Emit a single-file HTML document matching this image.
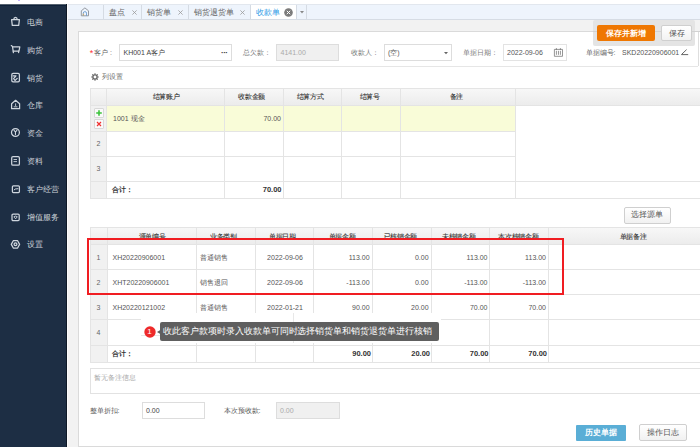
<!DOCTYPE html>
<html><head><meta charset="utf-8">
<style>
*{box-sizing:border-box;margin:0;padding:0}
html,body{width:700px;height:447px;overflow:hidden;background:#fff;font-family:"Liberation Sans",sans-serif;color:#555;position:relative}
.a{position:absolute}
.t{white-space:nowrap}
svg{position:absolute;overflow:visible}
</style></head><body>
<div class="a" style="left:18px;top:0px;width:2px;height:1px;background:#c6b3ff;"></div>
<div class="a" style="left:0px;top:4px;width:67px;height:443px;background:#1d2e44;"></div>
<div class="a" style="left:0px;top:4px;width:67px;height:1px;background:#56626f;"></div>
<div class="a" style="left:0px;top:5px;width:67px;height:1px;background:#0f2139;"></div>
<svg style="left:11px;top:17.0px" width="10" height="10" viewBox="0 0 10 10" fill="none" stroke="#cfd6de" stroke-width="1.25" stroke-linejoin="round" stroke-linecap="round"><path d="M0.6 2.6H8.4L7.7 8.4H1.3Z"/><path d="M2.7 2.5Q2.9 0.3 4.5 0.3Q6.1 0.3 6.3 2.5"/></svg>
<div class="a t" style="left:26.5px;top:13.0px;height:20px;line-height:20px;font-size:8px;color:#cdd3da;white-space:nowrap;">电商</div>
<svg style="left:11px;top:44.800000000000004px" width="10" height="10" viewBox="0 0 10 10" fill="none" stroke="#cfd6de" stroke-width="1.25" stroke-linejoin="round" stroke-linecap="round"><path d="M0.3 0.6L1.5 1.5L2.4 7.6"/><path d="M1.7 1.8H8.8L8 6H2.2"/><path d="M7.6 6V7.6"/></svg>
<div class="a t" style="left:26.5px;top:40.800000000000004px;height:20px;line-height:20px;font-size:8px;color:#cdd3da;white-space:nowrap;">购货</div>
<svg style="left:11px;top:72.60000000000001px" width="10" height="10" viewBox="0 0 10 10" fill="none" stroke="#cfd6de" stroke-width="1.25" stroke-linejoin="round" stroke-linecap="round"><rect x="0.8" y="0.4" width="7.6" height="8.4" rx="1.3"/><path d="M2.1 2.8H5L2.6 5.6M3.2 6.6L4.2 7.4L6.2 5.4"/></svg>
<div class="a t" style="left:26.5px;top:68.60000000000001px;height:20px;line-height:20px;font-size:8px;color:#cdd3da;white-space:nowrap;">销货</div>
<svg style="left:11px;top:100.4px" width="10" height="10" viewBox="0 0 10 10" fill="none" stroke="#cfd6de" stroke-width="1.25" stroke-linejoin="round" stroke-linecap="round"><path d="M0.6 3.8L4.6 0.3L8.6 3.8V8.7H0.6Z"/><path d="M3.1 6.8H6.1M4.6 3.8V5.6" stroke-width="0.9"/></svg>
<div class="a t" style="left:26.5px;top:96.4px;height:20px;line-height:20px;font-size:8px;color:#cdd3da;white-space:nowrap;">仓库</div>
<svg style="left:11px;top:128.2px" width="10" height="10" viewBox="0 0 10 10" fill="none" stroke="#cfd6de" stroke-width="1.25" stroke-linejoin="round" stroke-linecap="round"><circle cx="4.45" cy="4.45" r="3.95"/><path d="M3 2.3L4.45 4L5.9 2.3M4.45 4V6.6" stroke-width="1.1"/></svg>
<div class="a t" style="left:26.5px;top:124.19999999999999px;height:20px;line-height:20px;font-size:8px;color:#cdd3da;white-space:nowrap;">资金</div>
<svg style="left:11px;top:156.0px" width="10" height="10" viewBox="0 0 10 10" fill="none" stroke="#cfd6de" stroke-width="1.25" stroke-linejoin="round" stroke-linecap="round"><rect x="0.7" y="0.6" width="7.7" height="8.6" rx="1.3"/><path d="M2.9 3.5H5.6M2.9 5.6H5.6" stroke-width="0.9"/></svg>
<div class="a t" style="left:26.5px;top:152.0px;height:20px;line-height:20px;font-size:8px;color:#cdd3da;white-space:nowrap;">资料</div>
<svg style="left:11px;top:183.8px" width="10" height="10" viewBox="0 0 10 10" fill="none" stroke="#cfd6de" stroke-width="1.25" stroke-linejoin="round" stroke-linecap="round"><rect x="1.4" y="1.8" width="7" height="6.8" rx="1"/><path d="M3.2 5.9L4.2 5L6.9 4.7" stroke-width="1"/></svg>
<div class="a t" style="left:26.5px;top:179.8px;height:20px;line-height:20px;font-size:8px;color:#cdd3da;white-space:nowrap;">客户经营</div>
<svg style="left:11px;top:211.6px" width="10" height="10" viewBox="0 0 10 10" fill="none" stroke="#cfd6de" stroke-width="1.25" stroke-linejoin="round" stroke-linecap="round"><rect x="1" y="2" width="7.2" height="6.7" rx="1.1"/><path d="M2.9 4.6Q4.6 3.3 6.3 4.6M3.5 5.4L4.6 6.9L5.7 5.4" stroke-width="0.9"/></svg>
<div class="a t" style="left:26.5px;top:207.6px;height:20px;line-height:20px;font-size:8px;color:#cdd3da;white-space:nowrap;">增值服务</div>
<svg style="left:11px;top:239.4px" width="10" height="10" viewBox="0 0 10 10" fill="none" stroke="#cfd6de" stroke-width="1.25" stroke-linejoin="round" stroke-linecap="round"><path d="M2.3 1.7H6.6L8.6 5.4L6.6 9H2.3L0.3 5.4Z"/><circle cx="4.5" cy="5.2" r="1.45"/></svg>
<div class="a t" style="left:26.5px;top:235.4px;height:20px;line-height:20px;font-size:8px;color:#cdd3da;white-space:nowrap;">设置</div>
<div class="a" style="left:67px;top:20px;width:633px;height:427px;background:#f2f2f2;"></div>
<div class="a" style="left:66px;top:4px;width:1px;height:443px;background:#0e1826;"></div>
<div class="a" style="left:67px;top:4px;width:1px;height:443px;background:#fbfbfb;"></div>
<div class="a" style="left:68px;top:4px;width:632px;height:16px;background:#eef4fc;"></div>
<div class="a" style="left:68px;top:4px;width:632px;height:1px;background:#e2e7ee;"></div>
<div class="a" style="left:68px;top:19px;width:632px;height:1px;background:#d6dce4;"></div>
<div class="a" style="left:103px;top:5px;width:1px;height:14px;background:#d5dbe3;"></div>
<div class="a" style="left:141px;top:5px;width:1px;height:14px;background:#d5dbe3;"></div>
<div class="a" style="left:188px;top:5px;width:1px;height:14px;background:#d5dbe3;"></div>
<div class="a" style="left:250px;top:5px;width:1px;height:14px;background:#d5dbe3;"></div>
<div class="a" style="left:296px;top:5px;width:1px;height:14px;background:#d5dbe3;"></div>
<div class="a" style="left:306px;top:5px;width:1px;height:14px;background:#d5dbe3;"></div>
<div class="a" style="left:251px;top:5px;width:45px;height:14px;background:#ffffff;"></div>
<svg style="left:80px;top:6.8px" width="10" height="10" viewBox="0 0 10 10" fill="none" stroke="#8a8f96" stroke-width=".9" stroke-linejoin="round"><path d="M1.3 3.8L4.9 0.9L8.5 3.8V8.8H1.3z"/><path d="M3.3 8.8V6.2a1.6 1.6 0 0 1 3.2 0v2.6" stroke="#6a9bd0" stroke-width=".9"/><path d="M3.3 8.6V6.6" stroke="#e0a850"/></svg>
<div class="a t" style="left:108.5px;top:2.6999999999999993px;height:20px;line-height:20px;font-size:8px;color:#666;white-space:nowrap;">盘点</div>
<div class="a t" style="left:147px;top:2.6999999999999993px;height:20px;line-height:20px;font-size:8px;color:#666;white-space:nowrap;">销货单</div>
<div class="a t" style="left:193.5px;top:2.6999999999999993px;height:20px;line-height:20px;font-size:8px;color:#666;white-space:nowrap;">销货退货单</div>
<div class="a t" style="left:256px;top:2.6999999999999993px;height:20px;line-height:20px;font-size:8px;color:#2f9be6;white-space:nowrap;">收款单</div>
<svg style="left:131.5px;top:9.5px" width="5" height="5" viewBox="0 0 5 5"><path d="M.4 .4l4.2 4.2M4.6 .4L.4 4.6" stroke="#9a9a9a" stroke-width=".8"/></svg>
<svg style="left:177.9px;top:9.5px" width="5" height="5" viewBox="0 0 5 5"><path d="M.4 .4l4.2 4.2M4.6 .4L.4 4.6" stroke="#9a9a9a" stroke-width=".8"/></svg>
<svg style="left:240.0px;top:9.5px" width="5" height="5" viewBox="0 0 5 5"><path d="M.4 .4l4.2 4.2M4.6 .4L.4 4.6" stroke="#9a9a9a" stroke-width=".8"/></svg>
<svg style="left:284.4px;top:8px" width="9" height="9" viewBox="0 0 9 9"><circle cx="4.5" cy="4.5" r="4.3" fill="#7b7b7b"/><path d="M2.8 2.8l3.4 3.4M6.2 2.8L2.8 6.2" stroke="#fff" stroke-width="1"/></svg>
<svg style="left:299.5px;top:11px" width="4" height="3" viewBox="0 0 4 3"><path d="M0 0h4L2 2.4z" fill="#888"/></svg>
<div class="a" style="left:78px;top:31px;width:640px;height:416px;background:#ffffff;border:1px solid #dadada;"></div>
<div class="a t" style="left:89.8px;top:42.5px;height:20px;line-height:20px;font-size:9px;color:#f33;white-space:nowrap;">*</div>
<div class="a t" style="left:93.5px;top:42.5px;height:20px;line-height:20px;font-size:7px;color:#666;white-space:nowrap;">客户</div>
<div class="a t" style="left:110px;top:42.5px;height:20px;line-height:20px;font-size:7px;color:#777;white-space:nowrap;">:</div>
<div class="a" style="left:119px;top:44px;width:113px;height:17px;background:#fff;border:1px solid #dddddd;"></div>
<div class="a t" style="left:123.5px;top:42.5px;height:20px;line-height:20px;font-size:7px;color:#444;white-space:nowrap;">KH001 A客户</div>
<div class="a t" style="left:221px;top:42.5px;height:20px;line-height:20px;font-size:8px;color:#333;white-space:nowrap;font-weight:bold;letter-spacing:-0.5px">···</div>
<div class="a t" style="left:242.5px;top:42.5px;height:20px;line-height:20px;font-size:7px;color:#777;white-space:nowrap;">总欠款：</div>
<div class="a" style="left:276px;top:44px;width:63px;height:17px;background:#f0f0f0;border:1px solid #dddddd;"></div>
<div class="a t" style="left:280.5px;top:42.5px;height:20px;line-height:20px;font-size:7px;color:#aaa;white-space:nowrap;">4141.00</div>
<div class="a t" style="left:351px;top:42.5px;height:20px;line-height:20px;font-size:7px;color:#777;white-space:nowrap;">收款人：</div>
<div class="a" style="left:384px;top:44px;width:68px;height:17px;background:#fff;border:1px solid #dddddd;"></div>
<div class="a t" style="left:388px;top:42.5px;height:20px;line-height:20px;font-size:7px;color:#555;white-space:nowrap;">(空)</div>
<svg style="left:444px;top:51.5px" width="4" height="3" viewBox="0 0 4 3"><path d="M0 0h4L2 2.2z" fill="#666"/></svg>
<div class="a t" style="left:462.5px;top:42.5px;height:20px;line-height:20px;font-size:7px;color:#777;white-space:nowrap;">单据日期：</div>
<div class="a" style="left:503px;top:44px;width:64px;height:17px;background:#fff;border:1px solid #e3e3e3;"></div>
<div class="a t" style="left:507px;top:42.5px;height:20px;line-height:20px;font-size:7px;color:#555;white-space:nowrap;">2022-09-06</div>
<svg style="left:553px;top:47px" width="10" height="10" viewBox="0 0 10 10" fill="none" stroke="#7a7a7a" stroke-width=".8"><path d="M1.4 2.4V9.3H9.5V2.4H1.4"/><path d="M3.4 1.1V3M7.4 1.1V3M3.4 3.8V7.8M5.45 3.8V7.8M7.4 3.8V7.8"/></svg>
<div class="a t" style="left:585.5px;top:42.5px;height:20px;line-height:20px;font-size:7px;color:#666;white-space:nowrap;">单据编号:</div>
<div class="a t" style="left:622px;top:42.5px;height:20px;line-height:20px;font-size:7px;color:#555;white-space:nowrap;">SKD20220906001</div>
<svg style="left:680px;top:47.5px" width="10" height="10" viewBox="0 0 10 10" fill="none" stroke="#555" stroke-width=".9"><path d="M1.8 6.2L6.6 1.6M1.2 6.6H8.2"/></svg>
<div class="a" style="left:90px;top:66px;width:608px;height:1px;background:#e6e6e6;"></div>
<div class="a" style="left:698px;top:31px;width:1px;height:35px;background:#dedede;"></div>
<div class="a" style="left:593px;top:20px;width:102px;height:26px;background:#e4e4e4;border-radius:2px;"></div>
<div class="a" style="left:593px;top:31px;width:107px;height:1px;background:#d2d2d2;"></div>
<div class="a" style="left:597px;top:25px;width:58px;height:16px;background:#ef7701;border-radius:2px;"></div>
<div class="a t" style="left:526.2px;top:23.6px;width:200px;height:20px;line-height:20px;text-align:center;font-size:8px;color:#fff;font-weight:bold">保存并新增</div>
<div class="a" style="left:661px;top:25px;width:31px;height:16px;background:linear-gradient(#ffffff,#f2f2f2);border:1px solid #cfcfcf;border-radius:2px;"></div>
<div class="a t" style="left:576.6px;top:23.6px;width:200px;height:20px;line-height:20px;text-align:center;font-size:8px;color:#555;">保存</div>
<svg style="left:90.5px;top:73.3px" width="8" height="8" viewBox="0 0 8 8"><g fill="none" stroke="#666" stroke-width="1.3"><circle cx="4" cy="4" r="2.1"/><path d="M4 .2v1.5M4 6.3v1.5M.2 4h1.5M6.3 4h1.5M1.3 1.3l1 1M5.7 5.7l1 1M1.3 6.7l1-1M5.7 2.3l1-1" stroke-width="1.1"/></g></svg>
<div class="a t" style="left:102px;top:67.0px;height:20px;line-height:20px;font-size:7px;color:#666;white-space:nowrap;">列设置</div>
<div class="a" style="left:90px;top:88px;width:610px;height:17px;background:linear-gradient(#f8f8f8,#ececec);"></div>
<div class="a" style="left:90px;top:105px;width:16px;height:93px;background:#f1f1f1;"></div>
<div class="a" style="left:106px;top:105px;width:409px;height:26px;background:#f9fcd8;"></div>
<div class="a" style="left:90px;top:88px;width:610px;height:1px;background:#e4e4e4;"></div>
<div class="a" style="left:90px;top:105px;width:610px;height:1px;background:#e4e4e4;"></div>
<div class="a" style="left:90px;top:181px;width:610px;height:1px;background:#e4e4e4;"></div>
<div class="a" style="left:90px;top:198px;width:610px;height:1px;background:#e4e4e4;"></div>
<div class="a" style="left:90px;top:131px;width:425px;height:1px;background:#e4e4e4;"></div>
<div class="a" style="left:90px;top:156px;width:425px;height:1px;background:#e4e4e4;"></div>
<div class="a" style="left:90px;top:88px;width:1px;height:111px;background:#e4e4e4;"></div>
<div class="a" style="left:106px;top:88px;width:1px;height:111px;background:#e4e4e4;"></div>
<div class="a" style="left:224px;top:88px;width:1px;height:111px;background:#e4e4e4;"></div>
<div class="a" style="left:283px;top:88px;width:1px;height:111px;background:#e4e4e4;"></div>
<div class="a" style="left:341px;top:88px;width:1px;height:111px;background:#e4e4e4;"></div>
<div class="a" style="left:400px;top:88px;width:1px;height:111px;background:#e4e4e4;"></div>
<div class="a" style="left:515px;top:88px;width:1px;height:111px;background:#e4e4e4;"></div>
<div class="a t" style="left:66.0px;top:87.4px;width:200px;height:20px;line-height:20px;text-align:center;font-size:7px;color:#333;letter-spacing:-0.33px;-webkit-text-stroke:0.1px #333">结算账户</div>
<div class="a t" style="left:151.6px;top:87.4px;width:200px;height:20px;line-height:20px;text-align:center;font-size:7px;color:#333;letter-spacing:-0.33px;-webkit-text-stroke:0.1px #333">收款金额</div>
<div class="a t" style="left:210.0px;top:87.4px;width:200px;height:20px;line-height:20px;text-align:center;font-size:7px;color:#333;letter-spacing:-0.33px;-webkit-text-stroke:0.1px #333">结算方式</div>
<div class="a t" style="left:269.6px;top:87.4px;width:200px;height:20px;line-height:20px;text-align:center;font-size:7px;color:#333;letter-spacing:-0.33px;-webkit-text-stroke:0.1px #333">结算号</div>
<div class="a t" style="left:356.3px;top:87.4px;width:200px;height:20px;line-height:20px;text-align:center;font-size:7px;color:#333;letter-spacing:-0.33px;-webkit-text-stroke:0.1px #333">备注</div>
<div class="a" style="left:94px;top:108px;width:10px;height:10px;background:#fafafa;border:1px solid #d8d8d8;border-radius:1px;"></div>
<div class="a" style="left:94px;top:119px;width:10px;height:10px;background:#fafafa;border:1px solid #d8d8d8;border-radius:1px;"></div>
<svg style="left:95px;top:109px" width="8" height="8" viewBox="0 0 8 8"><path d="M4 1.2v5.6M1.2 4h5.6" stroke="#3cc43c" stroke-width="1.6"/></svg>
<svg style="left:95px;top:120px" width="8" height="8" viewBox="0 0 8 8"><path d="M2 2l4 4M6 2L2 6" stroke="#f03030" stroke-width="1.2"/></svg>
<div class="a t" style="left:113px;top:109.2px;height:20px;line-height:20px;font-size:7px;color:#555;white-space:nowrap;">1001 现金</div>
<div class="a t" style="left:-19px;top:109.2px;width:300px;height:20px;line-height:20px;text-align:right;font-size:7px;color:#555;white-space:nowrap;">70.00</div>
<div class="a t" style="left:-1.5px;top:134.3px;width:200px;height:20px;line-height:20px;text-align:center;font-size:7px;color:#666;">2</div>
<div class="a t" style="left:-1.5px;top:159.3px;width:200px;height:20px;line-height:20px;text-align:center;font-size:7px;color:#666;">3</div>
<div class="a t" style="left:112px;top:180.2px;height:20px;line-height:20px;font-size:7px;color:#333;white-space:nowrap;font-weight:bold">合计：</div>
<div class="a t" style="left:-18.5px;top:180.2px;width:300px;height:20px;line-height:20px;text-align:right;font-size:7.5px;color:#333;white-space:nowrap;font-weight:bold">70.00</div>
<div class="a" style="left:624px;top:206.5px;width:47px;height:17px;background:linear-gradient(#ffffff,#f1f1f1);border:1px solid #cfcfcf;border-radius:2px;"></div>
<div class="a t" style="left:547.3px;top:205.3px;width:200px;height:20px;line-height:20px;text-align:center;font-size:8px;color:#555;">选择源单</div>
<div class="a" style="left:90px;top:227px;width:610px;height:17px;background:linear-gradient(#f8f8f8,#ececec);"></div>
<div class="a" style="left:90px;top:244px;width:17px;height:118px;background:#f1f1f1;"></div>
<div class="a" style="left:90px;top:227px;width:610px;height:1px;background:#e4e4e4;"></div>
<div class="a" style="left:90px;top:244px;width:610px;height:1px;background:#e4e4e4;"></div>
<div class="a" style="left:90px;top:269px;width:610px;height:1px;background:#e4e4e4;"></div>
<div class="a" style="left:90px;top:294px;width:610px;height:1px;background:#e4e4e4;"></div>
<div class="a" style="left:90px;top:319px;width:610px;height:1px;background:#e4e4e4;"></div>
<div class="a" style="left:90px;top:345px;width:610px;height:1px;background:#e4e4e4;"></div>
<div class="a" style="left:90px;top:362px;width:610px;height:1px;background:#e4e4e4;"></div>
<div class="a" style="left:90px;top:227px;width:1px;height:135px;background:#e4e4e4;"></div>
<div class="a" style="left:107px;top:227px;width:1px;height:135px;background:#e4e4e4;"></div>
<div class="a" style="left:196px;top:227px;width:1px;height:135px;background:#e4e4e4;"></div>
<div class="a" style="left:255px;top:227px;width:1px;height:135px;background:#e4e4e4;"></div>
<div class="a" style="left:313px;top:227px;width:1px;height:135px;background:#e4e4e4;"></div>
<div class="a" style="left:372px;top:227px;width:1px;height:135px;background:#e4e4e4;"></div>
<div class="a" style="left:431px;top:227px;width:1px;height:135px;background:#e4e4e4;"></div>
<div class="a" style="left:489px;top:227px;width:1px;height:135px;background:#e4e4e4;"></div>
<div class="a" style="left:548px;top:227px;width:1px;height:135px;background:#e4e4e4;"></div>
<div class="a t" style="left:52.0px;top:226.6px;width:200px;height:20px;line-height:20px;text-align:center;font-size:7px;color:#333;letter-spacing:-0.33px;-webkit-text-stroke:0.1px #333">源单编号</div>
<div class="a t" style="left:123.5px;top:226.6px;width:200px;height:20px;line-height:20px;text-align:center;font-size:7px;color:#333;letter-spacing:-0.33px;-webkit-text-stroke:0.1px #333">业务类别</div>
<div class="a t" style="left:182.5px;top:226.6px;width:200px;height:20px;line-height:20px;text-align:center;font-size:7px;color:#333;letter-spacing:-0.33px;-webkit-text-stroke:0.1px #333">单据日期</div>
<div class="a t" style="left:242.0px;top:226.6px;width:200px;height:20px;line-height:20px;text-align:center;font-size:7px;color:#333;letter-spacing:-0.33px;-webkit-text-stroke:0.1px #333">单据金额</div>
<div class="a t" style="left:300.2px;top:226.6px;width:200px;height:20px;line-height:20px;text-align:center;font-size:7px;color:#333;letter-spacing:-0.33px;-webkit-text-stroke:0.1px #333">已核销金额</div>
<div class="a t" style="left:358.8px;top:226.6px;width:200px;height:20px;line-height:20px;text-align:center;font-size:7px;color:#333;letter-spacing:-0.33px;-webkit-text-stroke:0.1px #333">未核销金额</div>
<div class="a t" style="left:418.20000000000005px;top:226.6px;width:200px;height:20px;line-height:20px;text-align:center;font-size:7px;color:#333;letter-spacing:-0.33px;-webkit-text-stroke:0.1px #333">本次核销金额</div>
<div class="a t" style="left:533.0px;top:226.6px;width:200px;height:20px;line-height:20px;text-align:center;font-size:7px;color:#333;letter-spacing:-0.33px;-webkit-text-stroke:0.1px #333">单据备注</div>
<div class="a t" style="left:-1.5px;top:247.8px;width:200px;height:20px;line-height:20px;text-align:center;font-size:7px;color:#666;">1</div>
<div class="a t" style="left:112.5px;top:247.8px;height:20px;line-height:20px;font-size:7px;color:#555;white-space:nowrap;">XH20220906001</div>
<div class="a t" style="left:200px;top:247.8px;height:20px;line-height:20px;font-size:7px;color:#555;white-space:nowrap;">普通销售</div>
<div class="a t" style="left:185px;top:247.8px;width:200px;height:20px;line-height:20px;text-align:center;font-size:7px;color:#555;">2022-09-06</div>
<div class="a t" style="left:69.60000000000002px;top:247.8px;width:300px;height:20px;line-height:20px;text-align:right;font-size:7px;color:#555;white-space:nowrap;">113.00</div>
<div class="a t" style="left:128.60000000000002px;top:247.8px;width:300px;height:20px;line-height:20px;text-align:right;font-size:7px;color:#555;white-space:nowrap;">0.00</div>
<div class="a t" style="left:187.5px;top:247.8px;width:300px;height:20px;line-height:20px;text-align:right;font-size:7px;color:#555;white-space:nowrap;">113.00</div>
<div class="a t" style="left:246px;top:247.8px;width:300px;height:20px;line-height:20px;text-align:right;font-size:7px;color:#555;white-space:nowrap;">113.00</div>
<div class="a t" style="left:-1.5px;top:272.8px;width:200px;height:20px;line-height:20px;text-align:center;font-size:7px;color:#666;">2</div>
<div class="a t" style="left:112.5px;top:272.8px;height:20px;line-height:20px;font-size:7px;color:#555;white-space:nowrap;">XHT20220906001</div>
<div class="a t" style="left:200px;top:272.8px;height:20px;line-height:20px;font-size:7px;color:#555;white-space:nowrap;">销售退回</div>
<div class="a t" style="left:185px;top:272.8px;width:200px;height:20px;line-height:20px;text-align:center;font-size:7px;color:#555;">2022-09-06</div>
<div class="a t" style="left:69.60000000000002px;top:272.8px;width:300px;height:20px;line-height:20px;text-align:right;font-size:7px;color:#555;white-space:nowrap;">-113.00</div>
<div class="a t" style="left:128.60000000000002px;top:272.8px;width:300px;height:20px;line-height:20px;text-align:right;font-size:7px;color:#555;white-space:nowrap;">0.00</div>
<div class="a t" style="left:187.5px;top:272.8px;width:300px;height:20px;line-height:20px;text-align:right;font-size:7px;color:#555;white-space:nowrap;">-113.00</div>
<div class="a t" style="left:246px;top:272.8px;width:300px;height:20px;line-height:20px;text-align:right;font-size:7px;color:#555;white-space:nowrap;">-113.00</div>
<div class="a t" style="left:-1.5px;top:297.8px;width:200px;height:20px;line-height:20px;text-align:center;font-size:7px;color:#666;">3</div>
<div class="a t" style="left:112.5px;top:297.8px;height:20px;line-height:20px;font-size:7px;color:#555;white-space:nowrap;">XH20220121002</div>
<div class="a t" style="left:200px;top:297.8px;height:20px;line-height:20px;font-size:7px;color:#555;white-space:nowrap;">普通销售</div>
<div class="a t" style="left:185px;top:297.8px;width:200px;height:20px;line-height:20px;text-align:center;font-size:7px;color:#555;">2022-01-21</div>
<div class="a t" style="left:69.60000000000002px;top:297.8px;width:300px;height:20px;line-height:20px;text-align:right;font-size:7px;color:#555;white-space:nowrap;">90.00</div>
<div class="a t" style="left:128.60000000000002px;top:297.8px;width:300px;height:20px;line-height:20px;text-align:right;font-size:7px;color:#555;white-space:nowrap;">20.00</div>
<div class="a t" style="left:187.5px;top:297.8px;width:300px;height:20px;line-height:20px;text-align:right;font-size:7px;color:#555;white-space:nowrap;">70.00</div>
<div class="a t" style="left:246px;top:297.8px;width:300px;height:20px;line-height:20px;text-align:right;font-size:7px;color:#555;white-space:nowrap;">70.00</div>
<div class="a t" style="left:-1.5px;top:322.8px;width:200px;height:20px;line-height:20px;text-align:center;font-size:7px;color:#666;">4</div>
<div class="a t" style="left:112px;top:344.2px;height:20px;line-height:20px;font-size:7px;color:#333;white-space:nowrap;font-weight:bold">合计：</div>
<div class="a t" style="left:71px;top:344.2px;width:300px;height:20px;line-height:20px;text-align:right;font-size:7.5px;color:#333;white-space:nowrap;font-weight:bold">90.00</div>
<div class="a t" style="left:130px;top:344.2px;width:300px;height:20px;line-height:20px;text-align:right;font-size:7.5px;color:#333;white-space:nowrap;font-weight:bold">20.00</div>
<div class="a t" style="left:188.5px;top:344.2px;width:300px;height:20px;line-height:20px;text-align:right;font-size:7.5px;color:#333;white-space:nowrap;font-weight:bold">70.00</div>
<div class="a t" style="left:247px;top:344.2px;width:300px;height:20px;line-height:20px;text-align:right;font-size:7.5px;color:#333;white-space:nowrap;font-weight:bold">70.00</div>
<div class="a" style="left:141px;top:313px;width:300px;height:30px;background:#ffffff;"></div>
<div class="a" style="left:293px;top:313px;width:1px;height:30px;background:#e8e8e8;"></div>
<div class="a" style="left:141px;top:335px;width:19px;height:1px;background:#e6e6e6;"></div>
<div class="a" style="left:87px;top:238px;width:477px;height:57px;background:transparent;border:2px solid #f01d22;"></div>
<svg style="left:143.5px;top:325.5px" width="12" height="12" viewBox="0 0 12 12"><circle cx="6" cy="6" r="5.7" fill="#ee2a2a"/></svg>
<div class="a t" style="left:49.599999999999994px;top:321.6px;width:200px;height:20px;line-height:20px;text-align:center;font-size:8px;color:#fff;">1</div>
<div class="a" style="left:160px;top:322px;width:279px;height:18.8px;background:#5f5f5f;border-radius:2px;"></div>
<svg style="left:156.6px;top:328.6px" width="5" height="6" viewBox="0 0 5 6"><path d="M5 0L0 3l5 3z" fill="#5f5f5f"/></svg>
<div class="a t" style="left:163.4px;top:321.0px;height:20px;line-height:20px;font-size:9px;color:#fff;white-space:nowrap;letter-spacing:-0.06px">收此客户款项时录入收款单可同时选择销货单和销货退货单进行核销</div>
<div class="a" style="left:90px;top:368px;width:620px;height:26px;background:#fff;border:1px solid #e2e2e2;"></div>
<div class="a t" style="left:93.5px;top:367.5px;height:20px;line-height:20px;font-size:7px;color:#aaa;white-space:nowrap;">暂无备注信息</div>
<div class="a t" style="left:89.5px;top:400.5px;height:20px;line-height:20px;font-size:7px;color:#555;white-space:nowrap;">整单折扣:</div>
<div class="a" style="left:142px;top:402px;width:63px;height:17px;background:#fff;border:1px solid #dddddd;"></div>
<div class="a t" style="left:146px;top:400.5px;height:20px;line-height:20px;font-size:7px;color:#444;white-space:nowrap;">0.00</div>
<div class="a t" style="left:223.5px;top:400.5px;height:20px;line-height:20px;font-size:7px;color:#555;white-space:nowrap;">本次预收款:</div>
<div class="a" style="left:276px;top:402px;width:64px;height:17px;background:#f0f0f0;border:1px solid #dddddd;"></div>
<div class="a t" style="left:280px;top:400.5px;height:20px;line-height:20px;font-size:7px;color:#aaa;white-space:nowrap;">0.00</div>
<div class="a" style="left:576px;top:425px;width:50px;height:16px;background:#5aaed6;border-radius:1px;"></div>
<div class="a t" style="left:501px;top:423.0px;width:200px;height:20px;line-height:20px;text-align:center;font-size:8px;color:#fff;font-weight:bold">历史单据</div>
<div class="a" style="left:639px;top:424px;width:48px;height:16.5px;background:linear-gradient(#ffffff,#f1f1f1);border:1px solid #cfcfcf;border-radius:2px;"></div>
<div class="a t" style="left:563px;top:423.0px;width:200px;height:20px;line-height:20px;text-align:center;font-size:8px;color:#555;">操作日志</div>
</body></html>
